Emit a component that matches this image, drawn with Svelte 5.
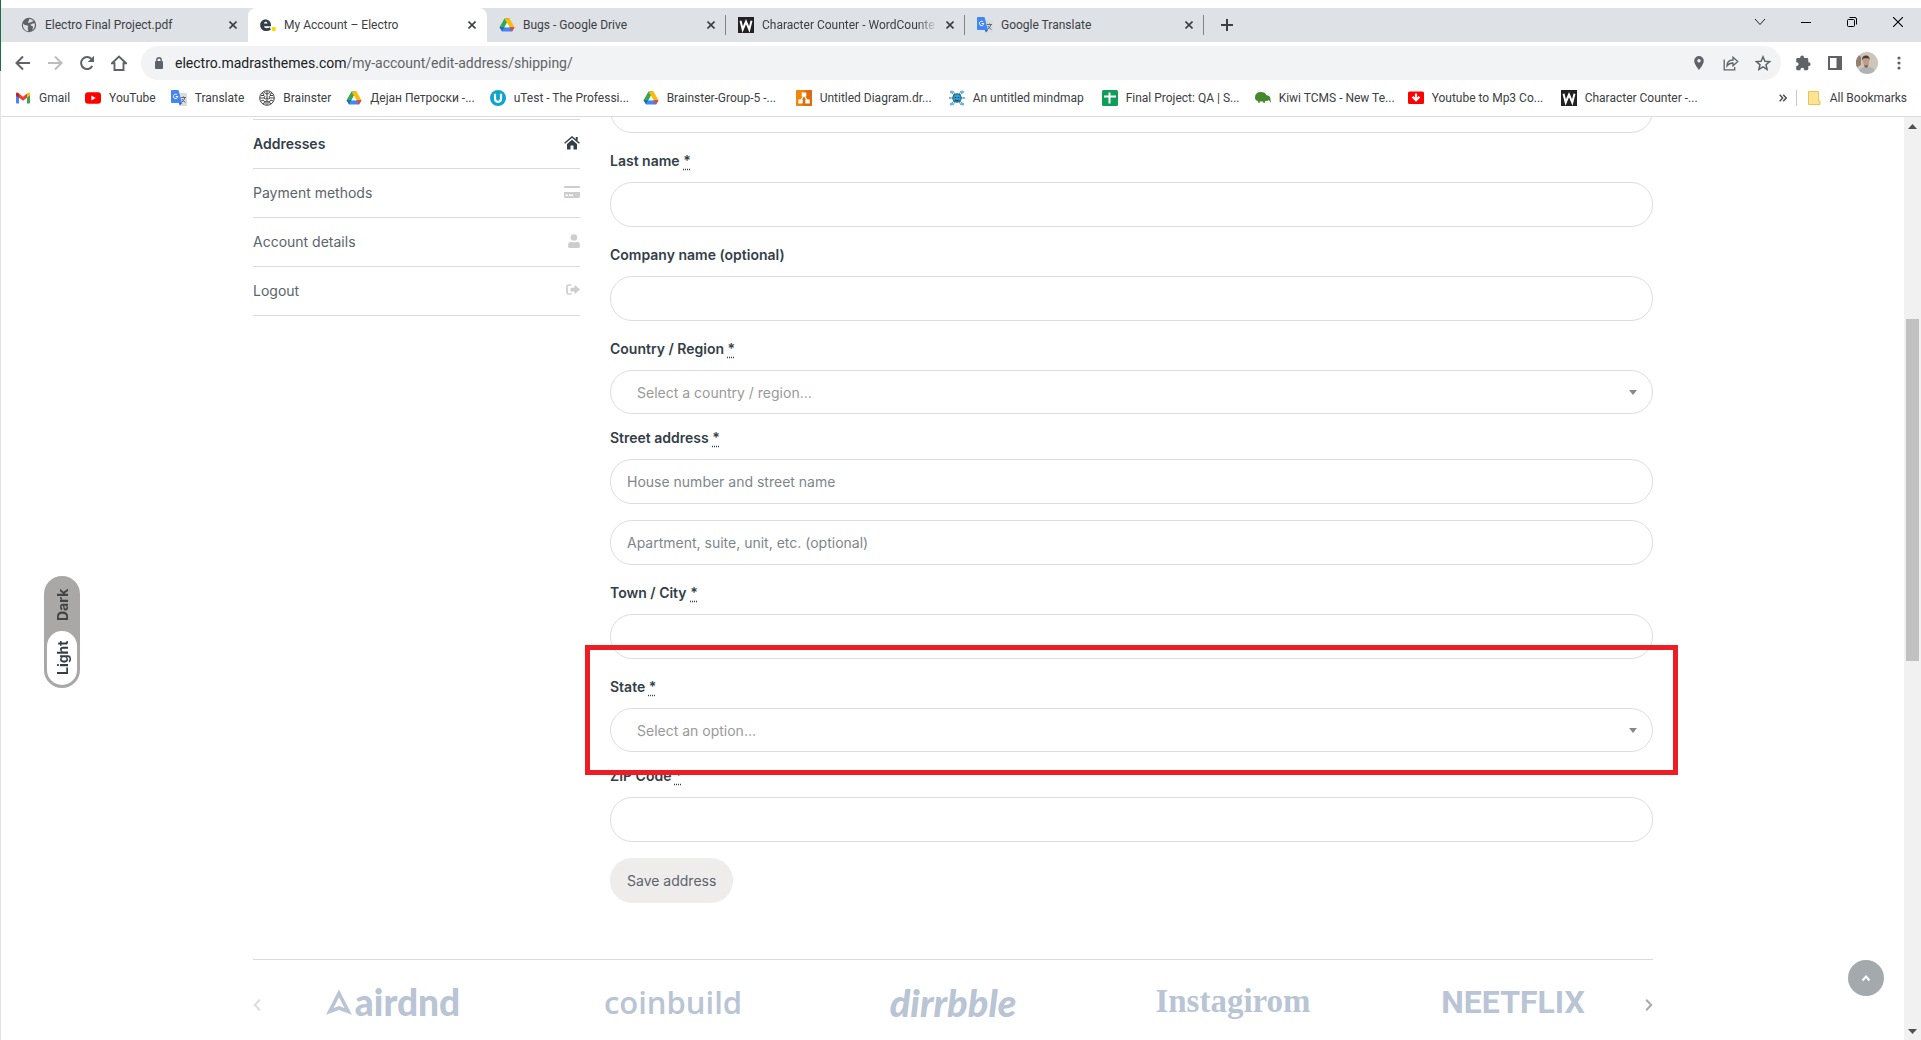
<script lang="ts">
  type Tab = { title: string; icon: string; active?: boolean; faded?: boolean };
  const tabs: Tab[] = [
    { title: 'Electro Final Project.pdf', icon: 'globe' },
    { title: 'My Account – Electro', icon: 'electro', active: true },
    { title: 'Bugs - Google Drive', icon: 'drive' },
    { title: 'Character Counter - WordCounte', icon: 'word', faded: true },
    { title: 'Google Translate', icon: 'translate' },
  ];

  const bookmarks = [
    { title: 'Gmail', icon: 'gmail' },
    { title: 'YouTube', icon: 'youtube' },
    { title: 'Translate', icon: 'translate' },
    { title: 'Brainster', icon: 'brain' },
    { title: 'Дејан Петроски -...', icon: 'drive' },
    { title: 'uTest - The Professi...', icon: 'utest', long: true },
    { title: 'Brainster-Group-5 -...', icon: 'drive', long: true },
    { title: 'Untitled Diagram.dr...', icon: 'drawio', long: true },
    { title: 'An untitled mindmap', icon: 'mindmap', long: true },
    { title: 'Final Project: QA | S...', icon: 'sheets', long: true },
    { title: 'Kiwi TCMS - New Te...', icon: 'kiwi', long: true },
    { title: 'Youtube to Mp3 Co...', icon: 'mp3', long: true },
    { title: 'Character Counter -...', icon: 'word', long: true },
  ];

  const account = [
    { title: 'Addresses', icon: 'house', current: true },
    { title: 'Payment methods', icon: 'card' },
    { title: 'Account details', icon: 'user' },
    { title: 'Logout', icon: 'logout' },
  ];

  const brands = ['airdnd', 'coinbuild', 'dirrbble', 'instagirom', 'neetflix'];
  const brandText: Record<string, string> = {
    airdnd: 'airdnd',
    coinbuild: 'coinbuild',
    dirrbble: 'dirrbble',
    instagirom: 'Instagirom',
    neetflix: 'NEETFLIX',
  };
</script>

{#snippet siteIcon(name: string)}
  <svg class="site-icon" viewBox="0 0 16 16" aria-hidden="true">
    {#if name === 'globe'}
      <circle cx="8" cy="8" r="7.2" fill="#5f6368" />
      <path d="M2.2 6.5c1 1.600 2.500 1.700 4 1.900 1 .2 1.300 1 .8 1.900-.5.8 0 2.200.4 3.900-3.500-.2-6.100-3.600-5.200-7.700zM8 2c2 .1 3.300.7 4.300 1.900-1 1-2.500.8-3.500 1.700-.9.900-2 .4-1.600-.7.300-.8 1.100-1.500.8-2.900zM13.800 6.500c.4 2.800-.5 5-2.500 6.500 0-1.500 1.200-2.200.6-3.400-.5-1-2.200-.5-2.400-1.600 0-1.300 2.500-1.800 4.300-1.500z" fill="#dee1e6" />
    {:else if name === 'electro'}
      <path d="M11 9.300H3.900c.5 2.300 3.700 2.300 6 .9l.9 2.500C6.200 15.500.2 13.500.2 7.900c0-7.300 11.600-7.600 10.800 1.400zM3.900 6.600h3.600c-.1-2.500-3.200-2.400-3.600 0z" fill="#333e48" />
      <circle cx="13.800" cy="12" r="2.200" fill="#fed700" />
    {:else if name === 'drive'}
      <path d="M5.500 1.500h5L8 6z" fill="#188038" />
      <path d="M5.500 1.500 8 5.800 3.200 14.400.500 10.200z" fill="#34a853" />
      <path d="M5.500 1.500h5l5 8.700h-5z" fill="#fbbc04" />
      <path d="M.5 10.200h5l-2.300 4.200z" fill="#1967d2" />
      <path d="M5.500 10.200h10l-2.500 4.200H3.200z" fill="#4285f4" />
      <path d="M10.500 10.200h5L13 14.400z" fill="#ea4335" />
      <path d="M8 5.800l2.500 4.400h-5z" fill="#fff" />
    {:else if name === 'word'}
      <rect width="16" height="16" fill="#222" />
      <path d="m2.500 3.800 2.200 8.700L8 4.500l3.300 8 2.200-8.700" fill="none" stroke="#fff" stroke-width="2" />
    {:else if name === 'translate'}
      <path d="M7 3h8q1 0 1 1v11q0 1-1 1H9z" fill="#dadce0" />
      <path d="M1 0h6.500L11 13H1q-1 0-1-1V1q0-1 1-1z" fill="#4285f4" />
      <path d="m8 13h3l-2.200 2.500z" fill="#1a56c4" />
      <path d="M6.800 6.500H4.700M6.800 6.500a2.200 2.200 0 1 1-.7-1.700" fill="none" stroke="#fff" stroke-width="1" />
      <path d="M10 7.500h5M12.500 6.500v1M14 7.500q-1 3.500-3.500 5M11 9q1 2.200 3.500 3.500" fill="none" stroke="#5f6c78" stroke-width="1" />
    {:else if name === 'gmail'}
      <path d="M1 3.500 4 5.700V13.500H2q-1 0-1-1z" fill="#4285f4" />
      <path d="M15 3.500 12 5.700v7.800h2q1 0 1-1z" fill="#34a853" />
      <path d="M4 3.600 8 6.700l4-3.100v4.200L8 10.800 4 7.800z" fill="#ea4335" />
      <path d="M1 4q0-2 1.800-1.300L4 3.600v4.200L1 5.600z" fill="#c5221f" />
      <path d="M15 4q0-2-1.800-1.300L12 3.600v4.200l3-2.200z" fill="#fbbc04" />
    {:else if name === 'youtube'}
      <rect y="2.200" width="16" height="11.600" rx="3" fill="#f00" />
      <path d="m6.400 5.500 4.300 2.500-4.300 2.500z" fill="#fff" />
    {:else if name === 'brain'}
      <circle cx="8" cy="8" r="7.300" fill="#fff" stroke="#444" stroke-width="1" />
      <path d="M8 1v14M3 3q2 0 2 2.500H2M5 1.500Q6 4 8 4M1 8h3q2 0 2-2M2 11q3-2 3 0t3 0M4 14q0-2 3-1M13 3q-2 0-2 2.500h3M11 1.500Q10 4 8 4M15 8h-3q-2 0-2-2M14 11q-3-2-3 0t-3 0M12 14q0-2-3-1M5 8q1 2 3 0 2 2 3 0" fill="none" stroke="#444" stroke-width="1" />
    {:else if name === 'utest'}
      <circle cx="8" cy="8" r="8" fill="#0ba5cf" />
      <path d="M5 3.700v4.800q0 3.300 3 3.300t3-3.300V3.700" fill="none" stroke="#fff" stroke-width="2.200" />
    {:else if name === 'drawio'}
      <rect width="16" height="16" rx="1" fill="#f08705" />
      <path d="M9 0h6q1 0 1 1v14q0 1-1 1H8l-4-3z" fill="#df6c0c" />
      <path d="M8 5 4.500 11M8 5l3.500 6" stroke="#fff" stroke-width="1.300" />
      <path d="M5.700 2.500h4.600v4H5.700zM2.300 9.500h4.400v4H2.300zM9.300 9.500h4.400v4H9.300z" fill="#fff" />
    {:else if name === 'mindmap'}
      <path d="m2 2 12 12M14 2 2 14M0 8h16M4 1l8 14M12 1 4 15" stroke="#3f8fb5" stroke-width=".9" />
      <circle cx="8" cy="8" r="4.200" fill="#2ba3dc" stroke="#24506a" />
      <circle cx="6.500" cy="7.500" r=".8" fill="#143d55" /><circle cx="9.500" cy="7.500" r=".8" fill="#143d55" />
      <path d="M6 10q2 1.300 4 0" fill="none" stroke="#143d55" />
      <g fill="#62b5da"><circle cx="2.500" cy="2" r="1.600" /><circle cx="13.500" cy="2" r="1.600" /><circle cx="2.500" cy="14" r="1.600" /><circle cx="13.500" cy="14" r="1.600" /><circle cx="1" cy="8" r="1" /><circle cx="15" cy="8" r="1" /></g>
    {:else if name === 'sheets'}
      <rect width="16" height="16" rx="1.500" fill="#0f9d58" />
      <path d="M7.500 2.500v11M2 6.500h12" stroke="#fff" stroke-width="2" />
    {:else if name === 'kiwi'}
      <path d="M0 7.500Q0 2 6 2q4 0 5.500 3.200 3.500.3 3.800 3L16 13l-2.200-3q-1.500 1.600-4 .8l.5 2H8.500l-1-1.600q-2 .4-2.800.1L5 12.800H3.300L2.900 11Q0 10.500 0 7.500z" fill="#44882c" />
    {:else if name === 'mp3'}
      <rect y="1.500" width="16" height="12.500" rx="1.500" fill="#f00" />
      <path d="M8 3.500v6M4.500 6.700 8 10.200l3.500-3.500" fill="none" stroke="#fff" stroke-width="2.200" />
    {/if}
  </svg>
{/snippet}

{#snippet menuIcon(name: string)}
  {#if name === 'house'}
    <svg width="16" height="14" viewBox="0 0 16 14" fill="#333e48" aria-hidden="true">
      <path d="M8 3.800 13 8v5q0 .5-.5.500H9.500V9.500h-3v4H3.500Q3 13.500 3 13V8z" />
      <path d="M.6 7.200 8 1l7.400 6.200" fill="none" stroke="#333e48" stroke-width="1.400" />
      <path d="M11.700 1h2v4l-2-1.600z" />
    </svg>
  {:else if name === 'card'}
    <svg width="16" height="12" viewBox="0 0 16 12" fill="#cbced1" aria-hidden="true">
      <path d="M0 2V1q0-1 1-1h14q1 0 1 1v1zM0 6h16v5q0 1-1 1H1q-1 0-1-1z" />
      <path d="M1.500 8.500H4V10H1.500zM5 8.500h4V10H5z" fill="#fff" />
    </svg>
  {:else if name === 'user'}
    <svg width="12" height="14" viewBox="0 0 12 14" fill="#cbced1" aria-hidden="true">
      <circle cx="6" cy="3.500" r="3.300" />
      <path d="M0 12q0-4.300 3-4.300 3 1 6 0 3 0 3 4.300 0 2-1.500 2h-9Q0 14 0 12z" />
    </svg>
  {:else}
    <svg width="14" height="12" viewBox="0 0 14 12" fill="#cbced1" aria-hidden="true">
      <path d="M5.500 1H2.500Q1 1 1 2.500v6Q1 10 2.500 10h3" fill="none" stroke="#cbced1" stroke-width="1.700" />
      <path d="M4.500 3.700H8.500V.8L14 5.500l-5.500 4.800V7.400h-4z" />
    </svg>
  {/if}
{/snippet}

{#snippet required()}<abbr title="required">*</abbr>{/snippet}

<div class="window">
  <header>
    <div class="tabstrip">
      {#each tabs as tab}
        <div class="tab" class:active={tab.active}>
          {@render siteIcon(tab.icon)}
          <span class="tab-title" class:faded={tab.faded}>{tab.title}</span>
          <button class="close" aria-label="Close tab">
            <svg width="8" height="8" viewBox="0 0 8 8"><path d="m.5.5 7 7m0-7-7 7" stroke="#3c4043" stroke-width="1.600" /></svg>
          </button>
        </div>
      {/each}
      <button class="new-tab" aria-label="New tab">
        <svg width="12" height="12" viewBox="0 0 12 12"><path d="M6 0v12M0 6h12" stroke="#3c4043" stroke-width="2" /></svg>
      </button>
      <div class="controls">
        <button aria-label="Search tabs"><svg width="12" height="8" viewBox="0 0 12 8"><path d="m1 1 5 5.500L11 1" fill="none" stroke="#222" /></svg></button>
        <button aria-label="Minimize"><svg width="10" height="10" viewBox="0 0 10 10"><path d="M0 5.500h10" stroke="#000" /></svg></button>
        <button aria-label="Restore"><svg width="10" height="10" viewBox="0 0 10 10" fill="none" stroke="#000"><rect x=".5" y="2.500" width="7" height="7" rx="1" /><path d="M2.500.500H8q1.500 0 1.500 1.500v5.500" /></svg></button>
        <button aria-label="Close"><svg width="10" height="10" viewBox="0 0 10 10"><path d="m0 0 10 10M10 0 0 10" stroke="#000" stroke-width="1.100" /></svg></button>
      </div>
    </div>

    <div class="toolbar">
      <div class="nav-buttons">
        <button aria-label="Back"><svg width="16" height="16" viewBox="0 0 16 16" fill="none" stroke="#5f6368" stroke-width="2"><path d="M15 8H2M8 1.500 1.500 8 8 14.500" /></svg></button>
        <button aria-label="Forward"><svg width="16" height="16" viewBox="0 0 16 16" fill="none" stroke="#bbbdbf" stroke-width="2"><path d="M1 8h13M8 1.500 14.500 8 8 14.500" /></svg></button>
        <button aria-label="Reload"><svg width="16" height="16" viewBox="0 0 16 16"><path d="M13.300 11A6 6 0 1 1 12.500 4" fill="none" stroke="#5f6368" stroke-width="2" /><path d="M15 .8V7H8.800z" fill="#5f6368" /></svg></button>
        <button aria-label="Home"><svg width="16" height="16" viewBox="0 0 16 16"><path d="M1 8.200 8 1.500l7 6.700h-2.500V15h-9V8.200z" fill="none" stroke="#5f6368" stroke-width="1.900" /></svg></button>
      </div>
      <div class="omnibox">
        <svg width="8" height="12" viewBox="0 0 8 12" aria-hidden="true"><rect y="4" width="8" height="8" rx="1" fill="#5f6368" /><path d="M1.800 5V3a2.200 2.200 0 0 1 4.400 0v2" fill="none" stroke="#5f6368" stroke-width="1.400" /></svg>
        <span class="url"><b>electro.madrasthemes.com</b>/my-account/edit-address/shipping/</span>
        <div class="page-actions">
          <button aria-label="Location"><svg width="10" height="14" viewBox="0 0 10 14"><path d="M5 0a4.800 4.800 0 0 1 4.800 4.800C9.800 8.500 5 14 5 14S.200 8.500.200 4.800A4.800 4.800 0 0 1 5 0z" fill="#5f6368" /><circle cx="5" cy="4.800" r="1.700" fill="#f1f3f4" /></svg></button>
          <button aria-label="Share"><svg width="16" height="15" viewBox="0 0 16 15" fill="none" stroke="#5f6368" stroke-width="1.300"><path d="M1.200 3.500v10.300h10.500V11M4 10c0-4 2-6 6-6V1.200L14.800 5.500 10 9.700V7C7 7 5.500 7.700 4 10z" /></svg></button>
          <button aria-label="Bookmark this page"><svg width="16" height="16" viewBox="0 0 16 16"><path d="m8 1.800 1.900 4.400 4.700.4-3.600 3.100 1.100 4.700L8 11.900l-4.100 2.500L5 9.700 1.400 6.600l4.700-.4z" fill="none" stroke="#5f6368" stroke-width="1.500" /></svg></button>
        </div>
      </div>
      <div class="extensions">
        <button aria-label="Extensions"><svg width="16" height="16" viewBox="0 0 16 16"><path d="M5.200 3V2.500a1.900 1.900 0 0 1 3.800 0V3h3q1.300 0 1.300 1.300v3h.4a1.900 1.900 0 0 1 0 3.800h-.4v3q0 1.100-1.300 1.100H9.200v-.5a1.900 1.900 0 0 0-3.800 0v.5H2.500q-1.300 0-1.300-1.300V11h.5a1.900 1.900 0 0 0 0-3.800h-.5V4.300Q1.200 3 2.500 3z" fill="#5f6368" /></svg></button>
        <button aria-label="Side panel"><svg width="14" height="14" viewBox="0 0 14 14"><path d="M1 1h12v12H1z" fill="none" stroke="#5f6368" stroke-width="2" /><path d="M8.500 1H13v12H8.500z" fill="#5f6368" /></svg></button>
        <button aria-label="Profile"><svg width="22" height="22" viewBox="0 0 22 22"><circle cx="11" cy="11" r="11" fill="#cbc5bb" /><path d="M3 3.300A11 11 0 0 0 1 15.300L5 13V5z" fill="#92806d" /><path d="M3.500 19Q5 15 9 15h4q4.500.5 5.500 4A11 11 0 0 1 3.500 19z" fill="#aeb2b3" /><path d="M6.700 8q.3-4 3.300-4t3.300 4l-.7 5.500q-1 2.500-2.200 2.500t-2.700-3z" fill="#c39a84" /><path d="M6.200 8.500Q5.500 4 9.500 3.500t4.300 4.500L12.500 6.300H7.500z" fill="#4a3a32" /><path d="M8 12.500q2 2 4 0l-.6 2.500q-1.400 1.500-2.600 0z" fill="#7d5c4c" /></svg></button>
        <button aria-label="Menu"><svg width="4" height="16" viewBox="0 0 4 16" fill="#5f6368"><circle cx="2" cy="3" r="1.600" /><circle cx="2" cy="8" r="1.600" /><circle cx="2" cy="13" r="1.600" /></svg></button>
      </div>
    </div>

    <nav class="bookmarks" aria-label="Bookmarks">
      {#each bookmarks as mark}
        <a href="#bookmark">{@render siteIcon(mark.icon)}<span class:long={mark.long}>{mark.title}</span></a>
      {/each}
      <button class="more" aria-label="More bookmarks"><svg width="8" height="8" viewBox="0 0 8 8"><path d="m.700.700 3 3.300-3 3.300M4.200.700l3 3.300-3 3.300" fill="none" stroke="#4a4d50" stroke-width="1.400" /></svg></button>
      <a class="all" href="#all"><svg width="13" height="16" viewBox="0 0 13 16" aria-hidden="true"><path d="M.500 1.500h10V11h1.500v3.500H.500z" fill="#fee392" stroke="#e8c452" /></svg><span>All Bookmarks</span></a>
    </nav>
  </header>

  <div class="viewport">
    <main>
      <div class="columns">
        <nav class="account" aria-label="Account">
          {#each account as item}
            <a href="#account" class:current={item.current}>{item.title}{@render menuIcon(item.icon)}</a>
          {/each}
        </nav>

        <form onsubmit={(e) => e.preventDefault()}>
          <input id="first" type="text" aria-label="First name" />
          <label for="last">Last name {@render required()}</label>
          <input id="last" type="text" />
          <label for="company">Company name (optional)</label>
          <input id="company" type="text" />
          <label for="country">Country / Region {@render required()}</label>
          <div class="select">
            <select id="country"><option>Select a country / region…</option></select>
          </div>
          <label for="street">Street address {@render required()}</label>
          <input id="street" type="text" placeholder="House number and street name" />
          <input type="text" aria-label="Apartment" placeholder="Apartment, suite, unit, etc. (optional)" />
          <label for="town">Town / City {@render required()}</label>
          <input id="town" type="text" />
          <div class="marked">
            <label for="state">State {@render required()}</label>
            <div class="select">
              <select id="state"><option>Select an option…</option></select>
            </div>
          </div>
          <label for="zip">ZIP Code {@render required()}</label>
          <input id="zip" type="text" />
          <button class="save" type="submit">Save address</button>
        </form>
      </div>

      <section class="brands" aria-label="Brands">
        {#each brands as brand}
          <a href="#brand" class={brand}>
            {#if brand === 'airdnd'}
              <svg width="26" height="26" viewBox="0 0 26 26" aria-hidden="true"><path d="M13 4.500 22.300 22.500 13 19 3.700 22.500z" fill="none" stroke="#b9c4d4" stroke-width="3.600" /></svg>
            {/if}
            {brandText[brand]}
          </a>
        {/each}
        <button class="prev" aria-label="Previous"><svg width="8" height="12" viewBox="0 0 8 12"><path d="M6.800.800 1.800 6l5 5.200" fill="none" stroke="#dcdcdc" stroke-width="2" /></svg></button>
        <button class="next" aria-label="Next"><svg width="8" height="12" viewBox="0 0 8 12"><path d="m1.200.800 5 5.200-5 5.200" fill="none" stroke="#aaa" stroke-width="2" /></svg></button>
      </section>
    </main>

    <div class="scrollbar" aria-hidden="true">
      <svg width="9" height="5" viewBox="0 0 9 5"><path d="M0 5 4.500 0 9 5z" fill="#505050" /></svg>
      <div class="track"><div class="thumb"></div></div>
      <svg width="9" height="5" viewBox="0 0 9 5"><path d="m0 0 4.500 5L9 0z" fill="#505050" /></svg>
    </div>

    <div class="theme-switch">
      <button>Dark</button>
      <button class="on">Light</button>
    </div>
    <button class="to-top" aria-label="Back to top"><svg width="10" height="7" viewBox="0 0 10 7"><path d="m1.500 5.500 3.500-4 3.500 4" fill="none" stroke="#fff" stroke-width="2" /></svg></button>
  </div>
  <div class="edge" aria-hidden="true"></div>
</div>

<style>
  :global(body) { margin: 0; background: #fff; }
  .window, .window :global(*) { box-sizing: border-box; }
  .window {
    position: relative;
    display: flex;
    flex-direction: column;
    height: 100vh;
    overflow: hidden;
    font-family: Inter, sans-serif;
    font-size: 14px;
    color: #333e48;
  }
  button { border: 0; padding: 0; background: none; font: inherit; color: inherit; display: grid; place-items: center; }
  a { color: inherit; text-decoration: none; }
  svg { display: block; flex: none; }
  .site-icon { width: 16px; height: 16px; }

  header {
    flex: none;
    padding-top: 8px;
    border-bottom: 1px solid #dadce0;
    font-family: Roboto, "Noto Sans", sans-serif;
    font-size: 12px;
    color: #3c4043;
  }
  .tabstrip { display: flex; height: 34px; background: #dee1e6; padding-left: 9px; }
  .tab {
    position: relative;
    display: flex;
    align-items: center;
    gap: 8px;
    width: 239px;
    padding: 0 11px 0 12px;
  }
  .tab:nth-child(n + 3)::after {
    content: '';
    position: absolute;
    right: 0;
    top: 7px;
    width: 1px;
    height: 20px;
    background: #808388;
  }
  .tab.active { background: #fff; border-radius: 8px 8px 0 0; }
  .tab-title { flex: 1; white-space: nowrap; }
  .faded { mask-image: linear-gradient(to right, #000 88%, transparent); }
  .close { width: 8px; height: 16px; }
  .new-tab { width: 46px; height: 34px; }
  .controls { display: flex; margin-left: auto; }
  .controls button { width: 46px; height: 28px; }

  .toolbar { display: flex; align-items: center; height: 42px; padding: 0 6px 0 7px; }
  .nav-buttons, .page-actions, .extensions { display: flex; }
  .nav-buttons { margin-right: 6px; }
  .nav-buttons button, .page-actions button, .extensions button { width: 32px; height: 32px; }
  .omnibox {
    flex: 1;
    display: flex;
    align-items: center;
    height: 34px;
    padding: 0 2px 0 14px;
    border-radius: 17px;
    background: #f1f3f4;
  }
  .url { margin-left: 12px; font-size: 14px; color: #5f6368; }
  .url b { font-weight: 400; color: #202124; }
  .page-actions { margin-left: auto; }
  .extensions { padding-left: 6px; }

  .bookmarks { display: flex; align-items: center; gap: 15px; height: 32px; padding: 0 14px 4px 15px; }
  .bookmarks a { display: flex; align-items: center; gap: 8px; white-space: nowrap; }
  .bookmarks .long { width: 114px; }
  .more { margin-left: auto; width: 12px; height: 20px; }
  .bookmarks .all { height: 16px; margin-left: -8px; padding-left: 11px; border-left: 1px solid #c4c7ca; gap: 9px; }

  .viewport { position: relative; flex: 1; min-height: 0; display: flex; }
  main { flex: 1; min-width: 0; overflow: hidden; padding: 2px 251px 0 253px; }
  .columns { display: grid; grid-template-columns: 327px 1fr; gap: 30px; align-items: start; }

  .account { border-top: 1px solid #dadada; color: #5b646c; }
  .account a {
    display: flex;
    align-items: center;
    justify-content: space-between;
    height: 49px;
    padding-bottom: 2px;
    border-bottom: 1px solid #dadada;
  }
  .account .current { font-weight: 600; color: #333e48; }

  form { display: flex; flex-direction: column; margin-top: -31px; }
  label { font-weight: 600; line-height: 23px; padding-bottom: 10px; }
  abbr { text-decoration: underline dotted; text-underline-offset: 3px; }
  input, select {
    width: 100%;
    border: 1px solid #dddddd;
    border-radius: 22px;
    background: #fff;
    font: inherit;
    color: #333e48;
    outline: none;
  }
  input { height: 45px; padding: 0 16px; margin: 0 0 16px; }
  input::placeholder { color: #7e868c; opacity: 1; }
  .select { position: relative; margin-bottom: 12px; }
  select { display: block; appearance: none; height: 44px; padding: 1px 26px; color: #999; }
  .select::after {
    content: '';
    position: absolute;
    right: 16px;
    top: 20px;
    border: 4px solid transparent;
    border-top: 5px solid #888;
    border-bottom: 0;
  }
  .marked { position: relative; display: flex; flex-direction: column; }
  .marked::after {
    content: '';
    position: absolute;
    z-index: 1;
    inset: -30px -25px -11px -25px;
    border: 5px solid #ee1c25;
    pointer-events: none;
  }
  .save { align-self: flex-start; height: 45px; padding: 0 17px; border-radius: 22px; background: #efecec; color: #5b646c; }

  .brands {
    position: relative;
    display: grid;
    grid-template-columns: repeat(5, 1fr);
    height: 92px;
    margin-top: 56px;
    border-top: 1px solid #dadada;
    color: #b9c4d4;
  }
  .brands a { display: flex; align-items: center; justify-content: center; padding-bottom: 8px; white-space: nowrap; }
  .airdnd { font: 900 37px Lato, sans-serif; gap: 3px; }
  .coinbuild { font: 600 31px "Open Sans", sans-serif; }
  .dirrbble { font: italic 900 38px Lato, sans-serif; }
  .instagirom { font: 700 33px "Liberation Serif", serif; }
  .neetflix { font: 700 32px Roboto, sans-serif; }
  .prev, .next { position: absolute; top: 39px; height: 12px; }
  .prev { left: 0; }
  .next { right: 0; }

  .scrollbar { display: flex; flex-direction: column; align-items: center; width: 17px; padding: 7px 0 6px; background: #f1f1f1; }
  .track { flex: 1; width: 13px; margin: 5px 0; }
  .thumb { width: 13px; height: 342px; margin-top: 185px; background: #c1c1c1; }

  .theme-switch {
    position: absolute;
    left: 44px;
    top: 459px;
    display: flex;
    flex-direction: column;
    width: 36px;
    padding: 3px;
    border-radius: 18px;
    background: #a9a8a7;
    font-weight: 700;
  }
  .theme-switch button { height: 52px; border-radius: 15px; writing-mode: vertical-rl; transform: rotate(180deg); color: #444; }
  .theme-switch .on { height: 54px; background: #fff; color: #333e48; }
  .to-top { position: absolute; right: 37px; bottom: 44px; width: 36px; height: 36px; border-radius: 50%; background: #a3a9ad; }
  .edge { position: absolute; left: 0; top: 0; width: 1px; height: 100%; background: linear-gradient(#1d6f42 71px, #e3e3e3 71px); }
</style>
